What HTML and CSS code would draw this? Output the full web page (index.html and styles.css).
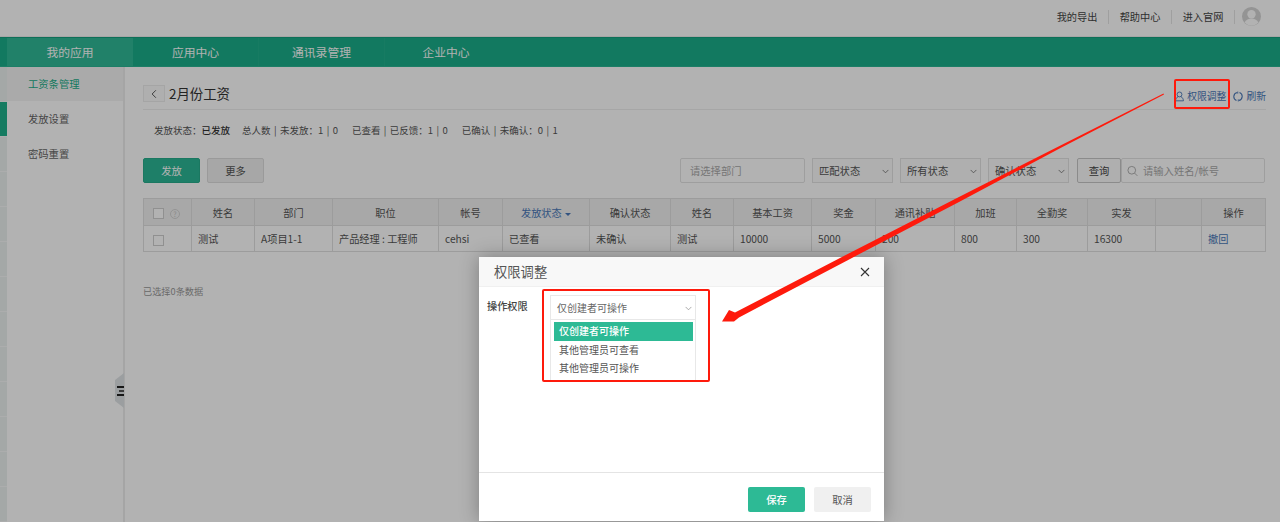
FILE: index.html
```html
<!DOCTYPE html>
<html lang="zh-CN">
<head>
    <meta charset="UTF-8">
    <title>2月份工资</title>
    <link rel="stylesheet" href="styles.css">
</head>
<body>
<div class="page">
    <div class="top-bar">
        <a class="top-link">我的导出</a>
        <a class="top-link">帮助中心</a>
        <a class="top-link">进入官网</a>
        <svg class="avatar" viewBox="0 0 20 20">
            <circle cx="10" cy="10" r="10" fill="#d4d4d4"/>
            <circle cx="10" cy="7.6" r="4.4" fill="#fff"/>
            <path d="M2.6 16.4c1.6-3 4.4-4.2 7.4-4.2s5.800 1.200 7.400 4.200A10 10 0 0 1 2.600 16.400z" fill="#fff"/>
        </svg>
    </div>

    <div class="nav">
        <a class="nav-item active">我的应用</a>
        <a class="nav-item">应用中心</a>
        <a class="nav-item">通讯录管理</a>
        <a class="nav-item last">企业中心</a>
    </div>

    <div class="main">
        <div class="strip">
            <div class="strip-item"></div>
            <div class="strip-item on"></div>
            <div class="strip-item"></div>
            <div class="strip-item"></div>
            <div class="strip-item"></div>
            <div class="strip-item"></div>
            <div class="strip-item"></div>
            <div class="strip-item"></div>
            <div class="strip-item"></div>
            <div class="strip-item"></div>
            <div class="strip-item"></div>
            <div class="strip-item"></div>
            <div class="strip-item"></div>
        </div>

        <div class="side">
            <div class="side-item current">工资条管理</div>
            <div class="side-item">发放设置</div>
            <div class="side-item">密码重置</div>
            <div class="side-handle">
                <span class="bar"></span>
                <span class="bar short"></span>
                <span class="bar"></span>
            </div>
        </div>

        <div class="content">
            <div class="title-row">
                <span class="back">
                    <svg viewBox="0 0 8 12" width="6" height="10"><path d="M6.500 1 1.500 6l5 5" fill="none" stroke="#555" stroke-width="1.300"/></svg>
                </span>
                <h1 class="title">2月份工资</h1>
                <a class="tool-link perm">
                    <svg viewBox="0 0 10 12" width="9" height="11"><circle cx="5" cy="3.700" r="2.700" fill="none" stroke="#4a78b8" stroke-width="1"/><path d="M3.300 6.200C1.800 7 .8 8.500.6 10.800h8.800C9.200 8.500 8.200 7 6.700 6.200" fill="none" stroke="#4a78b8" stroke-width="1"/></svg>
                    权限调整
                </a>
                <a class="tool-link">
                    <svg viewBox="0 0 12 12" width="10" height="11"><path d="M5.200 1.100A5 5 0 0 0 4.200 10.700M6.800 10.900A5 5 0 0 0 7.800 1.300" fill="none" stroke="#4a78b8" stroke-width="1.300"/><path d="M5.700 0v2.600M6.300 9.400v2.600" stroke="#4a78b8" stroke-width="1"/></svg>
                    刷新
                </a>
            </div>

            <div class="summary">
                <span class="state">发放状态：<b>已发放</b></span>
                <span>总人数 | 未发放：1 | 0</span>
                <span>已查看 | 已反馈：1 | 0</span>
                <span>已确认 | 未确认：0 | 1</span>
            </div>

            <div class="toolbar">
                <button class="btn primary">发放</button>
                <button class="btn more">更多</button>
                <div class="filters">
                    <div class="field dept">请选择部门</div>
                    <div class="pick">匹配状态<svg class="chevron" viewBox="0 0 8 5"><path d="M.7.700 4 4l3.300-3.300" fill="none" stroke="#666" stroke-width=".9"/></svg></div>
                    <div class="pick">所有状态<svg class="chevron" viewBox="0 0 8 5"><path d="M.7.700 4 4l3.300-3.300" fill="none" stroke="#666" stroke-width=".9"/></svg></div>
                    <div class="pick">确认状态<svg class="chevron" viewBox="0 0 8 5"><path d="M.7.700 4 4l3.300-3.300" fill="none" stroke="#666" stroke-width=".9"/></svg></div>
                    <div class="search-group">
                        <button class="btn query">查询</button>
                        <div class="field search">
                            <svg viewBox="0 0 12 12" width="11" height="12"><circle cx="5.200" cy="5.200" r="4.200" fill="none" stroke="#aaa" stroke-width="1"/><path d="m8.300 8.300 3 3" stroke="#aaa" stroke-width="1"/></svg>
                            请输入姓名/帐号
                        </div>
                    </div>
                </div>
            </div>

            <table class="grid">
                <colgroup>
                    <col class="c48"><col class="c63"><col class="c78"><col class="c106"><col class="c64"><col class="c87"><col class="c81"><col class="c63">
                    <col class="c78"><col class="c64"><col class="c79"><col class="c62"><col class="c71"><col class="c68"><col class="c46"><col class="c64">
                </colgroup>
                <thead>
                    <tr>
                        <th class="check-cell"><span class="check"></span><span class="help">?</span></th>
                        <th>姓名</th>
                        <th>部门</th>
                        <th>职位</th>
                        <th>帐号</th>
                        <th class="sorted">发放状态 <span class="caret"></span></th>
                        <th>确认状态</th>
                        <th>姓名</th>
                        <th>基本工资</th>
                        <th>奖金</th>
                        <th>通讯补贴</th>
                        <th>加班</th>
                        <th>全勤奖</th>
                        <th>实发</th>
                        <th></th>
                        <th>操作</th>
                    </tr>
                </thead>
                <tbody>
                    <tr>
                        <td class="check-cell"><span class="check"></span></td>
                        <td>测试</td>
                        <td>A项目1-1</td>
                        <td>产品经理 : 工程师</td>
                        <td>cehsi</td>
                        <td>已查看</td>
                        <td>未确认</td>
                        <td>测试</td>
                        <td>10000</td>
                        <td>5000</td>
                        <td>200</td>
                        <td>800</td>
                        <td>300</td>
                        <td>16300</td>
                        <td></td>
                        <td><a class="revoke">撤回</a></td>
                    </tr>
                </tbody>
            </table>

            <div class="selected">已选择0条数据</div>
        </div>
    </div>

    <div class="overlay"></div>

    <div class="modal">
        <div class="modal-head">
            <span class="modal-title">权限调整</span>
            <svg class="close" viewBox="0 0 10 10"><path d="m1 1 8 8M9 1 1 9" stroke="#333" stroke-width="1.100"/></svg>
        </div>
        <div class="modal-body">
            <label class="modal-label">操作权限</label>
            <div class="dropdown">
                <div class="dropdown-value">仅创建者可操作<svg class="chevron" viewBox="0 0 8 5"><path d="M.7.700 4 4l3.300-3.300" fill="none" stroke="#888" stroke-width=".8"/></svg></div>
                <div class="dropdown-list">
                    <div class="option selected-option">仅创建者可操作</div>
                    <div class="option">其他管理员可查看</div>
                    <div class="option">其他管理员可操作</div>
                </div>
            </div>
        </div>
        <div class="modal-foot">
            <button class="btn save">保存</button>
            <button class="btn cancel">取消</button>
        </div>
    </div>

    <div class="mark mark-link"></div>
    <div class="mark mark-list"></div>
    <svg class="arrow" viewBox="0 0 1280 522" width="1280" height="522">
        <path d="M1163.500 93.500 1059.500 146 957 198 844.800 255.600 735 312.500 729 310 722 321.500 734 321.500 739 317.500 847.200 260.400 959 202 1060.500 148 1164 94.500z" fill="#fe1a0c"/>
    </svg>
</div>
</body>
</html>
```

FILE: styles.css
```css
* {
    box-sizing: border-box;
}

body {
    margin: 0;
    font-family: "Noto Sans CJK SC", "Open Sans", sans-serif;
    font-size: 10px;
    color: #555;
    background-color: #fff;
}

.page {
    position: relative;
    width: 1280px;
    height: 522px;
    overflow: hidden;
}

/* top bar */
.top-bar {
    display: flex;
    align-items: center;
    justify-content: flex-end;
    height: 37px;
    padding: 0 19px 3px 0;
    border-bottom: 1px solid #eee;
}

.top-link {
    display: block;
    width: 63px;
    height: 14px;
    line-height: 14px;
    text-align: center;
    font-size: 10.200px;
    color: #444;
    border-right: 1px solid #e4e4e4;
}

.avatar {
    width: 19px;
    height: 19px;
    margin-left: 7px;
}

/* nav */
.nav {
    display: flex;
    height: 30px;
    padding-left: 7px;
    background-color: #1aae8a;
    border-top: 1px solid #15a07e;
    border-bottom: 1px solid #29b592;
}

.nav-item {
    width: 126px;
    line-height: 28px;
    text-align: center;
    font-size: 11.800px;
    color: #fff;
    position: relative;
}

.nav-item.active {
    background-color: #30b997;
}

.nav-item + .nav-item {
    border-right: 1px solid #21b08d;
}

.nav-item.last {
    width: 122px;
    border-right: none;
}

/* layout */
.main {
    display: flex;
    height: 455px;
}

.strip {
    width: 7px;
    flex-shrink: 0;
    background-color: #ebf1f0;
}

.strip-item {
    height: 35px;
    border-bottom: 1px solid #f6f8f8;
}

.strip-item.on {
    background-color: #1fb08c;
}

.side {
    position: relative;
    width: 118px;
    flex-shrink: 0;
    border-right: 2px solid #ececec;
}

.side-item {
    height: 35px;
    padding: 0 0 2px 21px;
    display: flex;
    align-items: center;
    font-size: 10.300px;
    color: #666;
}

.side-item.current {
    height: 34px;
    margin-bottom: 1px;
    background-color: #f4f4f4;
    color: #1aae8a;
}

.side-handle {
    position: absolute;
    left: 108px;
    top: 306px;
    width: 9px;
    height: 35px;
    padding-left: 2px;
    display: flex;
    flex-direction: column;
    justify-content: center;
    gap: 2px;
    background-color: #dfe3e6;
    clip-path: polygon(0 20%, 100% 0, 100% 100%, 0 80%);
}

.bar {
    display: block;
    height: 2px;
    background-color: #222;
}

.bar.short {
    margin-left: 2px;
    background-color: #555;
}

.content {
    flex: 1;
    padding: 0 15px 0 18px;
}

/* title row */
.title-row {
    display: flex;
    align-items: center;
    height: 43px;
    padding-top: 9px;
    border-bottom: 1px solid #eee;
}

.back {
    display: flex;
    align-items: center;
    justify-content: center;
    width: 22px;
    height: 17px;
    margin-top: 2px;
    background-color: #fbfbfb;
    border: 1px solid #ececec;
}

.title {
    flex: 1;
    margin: 0 0 0 4px;
    font-size: 13.400px;
    font-weight: normal;
    color: #333;
}

.tool-link {
    display: flex;
    align-items: center;
    gap: 3px;
    margin-left: 7px;
    padding-top: 7px;
    font-size: 9.800px;
    color: #4a78b8;
}

/* summary */
.summary {
    display: flex;
    gap: 14px;
    height: 48px;
    padding: 13px 0 0 11px;
    font-size: 9.500px;
    word-spacing: 1.300px;
    color: #555;
}

.summary .state {
    margin-right: -2px;
}

.summary b {
    color: #333;
    font-weight: 500;
}

/* toolbar */
.toolbar {
    display: flex;
    height: 25px;
}

.btn {
    width: 57px;
    height: 25px;
    padding: 0;
    border: 1px solid transparent;
    border-radius: 2px;
    font-family: inherit;
    font-size: 10.300px;
    cursor: pointer;
}

.primary {
    background-color: #2cb795;
    border-color: #27ad8b;
    color: #fff;
}

.more {
    margin-left: 7px;
    background-color: #efefef;
    border-color: #ddd;
    color: #555;
}

.filters {
    display: flex;
    gap: 7px;
    margin-left: auto;
    margin-right: 1px;
}

.field {
    height: 25px;
    display: flex;
    align-items: center;
    background-color: #fff;
    border: 1px solid #e2e2e2;
    border-radius: 2px;
    font-size: 10.300px;
    color: #aaa;
}

.dept {
    width: 125px;
    padding-left: 9px;
}

.pick {
    position: relative;
    width: 81px;
    height: 25px;
    padding-left: 6px;
    line-height: 23px;
    background-color: #fbfbfb;
    border: 1px solid #e2e2e2;
    font-size: 10.300px;
    color: #555;
}

.pick .chevron,
.dropdown-value .chevron {
    position: absolute;
    right: 3px;
    top: 10px;
    width: 7px;
    height: 5px;
}

.search-group {
    display: flex;
    margin-left: 1px;
}

.query {
    width: 44px;
    background-color: #fbfbfb;
    border-color: #c8c8c8;
    color: #444;
}

.search {
    width: 144px;
    padding-left: 5px;
    gap: 5px;
}

/* table */
.grid {
    width: 1122px;
    margin-top: 15px;
    table-layout: fixed;
    border-collapse: collapse;
    font-size: 10.200px;
}

.c46 { width: 46px; }
.c48 { width: 48px; }
.c62 { width: 62px; }
.c63 { width: 63px; }
.c64 { width: 64px; }
.c71 { width: 71px; }
.c68 { width: 68px; }
.c78 { width: 78px; }
.c79 { width: 79px; }
.c81 { width: 81px; }
.c87 { width: 87px; }
.c106 { width: 106px; }

.grid th {
    height: 27px;
    padding: 0;
    background-color: #f1f1f1;
    border: 1px solid #e0e0e0;
    font-weight: normal;
    color: #555;
    text-align: center;
}

.grid td {
    height: 26px;
    padding: 0 0 0 6px;
    border: 1px solid #e0e0e0;
    color: #555;
    white-space: nowrap;
}

.grid th.check-cell,
.grid td.check-cell {
    padding-left: 9px;
    text-align: left;
}

.grid .sorted {
    color: #4a78b8;
}

.caret {
    display: inline-block;
    margin-left: 1px;
    vertical-align: 1px;
    border-top: 3px solid #4a78b8;
    border-left: 3px solid transparent;
    border-right: 3px solid transparent;
}

.check {
    display: inline-block;
    width: 11px;
    height: 11px;
    vertical-align: middle;
    background-color: #fff;
    border: 1px solid #cfcfcf;
}

.help {
    display: inline-block;
    width: 10px;
    height: 10px;
    margin-left: 6px;
    line-height: 9px;
    vertical-align: middle;
    text-align: center;
    font-size: 7px;
    color: #c4c4c4;
    border: 1px solid #d4d4d4;
    border-radius: 50%;
}

.revoke {
    color: #4a78b8;
}

.selected {
    margin-top: 32px;
    font-size: 9.200px;
    color: #999;
}

/* dialog */
.overlay {
    position: absolute;
    left: 0;
    top: 0;
    width: 100%;
    height: 100%;
    background-color: rgba(0, 0, 0, 0.3);
}

.modal {
    position: absolute;
    left: 479px;
    top: 257px;
    width: 405px;
    height: 264px;
    display: flex;
    flex-direction: column;
    background-color: #fff;
    box-shadow: 0 0 18px rgba(0, 0, 0, 0.3);
}

.modal-head {
    display: flex;
    align-items: center;
    justify-content: space-between;
    height: 30px;
    padding: 0 14px 0 15px;
    background-color: #f8f8f8;
    border-bottom: 1px solid #f0f0f0;
}

.modal-title {
    font-size: 13.300px;
    color: #555;
}

.close {
    width: 10px;
    height: 10px;
}

.modal-body {
    flex: 1;
    display: flex;
    padding: 8px 0 0 8px;
    border-bottom: 1px solid #e4e4e4;
}

.modal-label {
    width: 63px;
    font-size: 10.200px;
    font-weight: 500;
    color: #444;
    line-height: 22px;
}

.dropdown {
    width: 146px;
}

.dropdown-value {
    position: relative;
    height: 25px;
    padding-left: 6px;
    line-height: 24px;
    border: 1px solid #e8e8e8;
    font-size: 10px;
    color: #666;
}

.dropdown-list {
    height: 60px;
    padding: 2px 2px 0 3px;
    border: 1px solid #e8e8e8;
    border-top: none;
    border-bottom: none;
}

.option {
    height: 18px;
    padding-left: 5px;
    line-height: 17px;
    font-size: 10px;
    color: #555;
}

.selected-option {
    height: 19px;
    line-height: 18px;
    background-color: #2dba95;
    color: #fff;
    font-weight: 500;
}

.modal-foot {
    display: flex;
    justify-content: flex-end;
    gap: 9px;
    height: 48px;
    padding: 14px 13px 0 0;
}

.save {
    background-color: #2dba95;
    color: #fff;
    font-weight: 500;
}

.cancel {
    background-color: #f0f0f0;
    color: #555;
}

/* red annotations */
.mark {
    position: absolute;
    border: 2px solid #fe1a0c;
    border-radius: 2px;
}

.mark-link {
    left: 1174px;
    top: 79px;
    width: 56px;
    height: 30px;
}

.mark-list {
    left: 542px;
    top: 289px;
    width: 168px;
    height: 93px;
}

.arrow {
    position: absolute;
    left: 0;
    top: 0;
}
```
